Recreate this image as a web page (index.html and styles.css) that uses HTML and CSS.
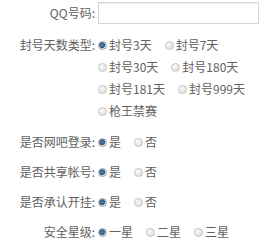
FILE: index.html
```html
<!DOCTYPE html>
<html>
  <head>
    <meta charset="utf-8" />
    <title>封号申请</title>
    <link rel="stylesheet" href="styles.css">
  </head>
  <body>
    <form class="ban-form" action="">
      <div class="row first">
        <label class="lbl">QQ号码:</label>
        <input class="txt" type="text" />
      </div>

      <div class="row multi">
        <label class="lbl">封号天数类型:</label>
        <div class="opts">
          <div class="line">
            <span class="opt"><i class="radio on"></i>封号3天</span>
            <span class="opt"><i class="radio"></i>封号7天</span>
          </div>
          <div class="line">
            <span class="opt"><i class="radio"></i>封号30天</span>
            <span class="opt"><i class="radio"></i>封号180天</span>
          </div>
          <div class="line">
            <span class="opt"><i class="radio"></i>封号181天</span>
            <span class="opt"><i class="radio"></i>封号999天</span>
          </div>
          <div class="line">
            <span class="opt"><i class="radio"></i>枪王禁赛</span>
          </div>
        </div>
      </div>

      <div class="row">
        <label class="lbl">是否网吧登录:</label>
        <div class="opts">
          <div class="line">
            <span class="opt"><i class="radio on"></i>是</span>
            <span class="opt"><i class="radio"></i>否</span>
          </div>
        </div>
      </div>

      <div class="row">
        <label class="lbl">是否共享帐号:</label>
        <div class="opts">
          <div class="line">
            <span class="opt"><i class="radio on"></i>是</span>
            <span class="opt"><i class="radio"></i>否</span>
          </div>
        </div>
      </div>

      <div class="row">
        <label class="lbl">是否承认开挂:</label>
        <div class="opts">
          <div class="line">
            <span class="opt"><i class="radio on"></i>是</span>
            <span class="opt"><i class="radio"></i>否</span>
          </div>
        </div>
      </div>

      <div class="row">
        <label class="lbl">安全星级:</label>
        <div class="opts">
          <div class="line">
            <span class="opt"><i class="radio on"></i>一星</span>
            <span class="opt"><i class="radio"></i>二星</span>
            <span class="opt"><i class="radio"></i>三星</span>
          </div>
        </div>
      </div>
    </form>
  </body>
</html>
```

FILE: styles.css
```css
body {
  margin: 0;
  background: #fff;
  color: #616161;
  font-family: "Noto Sans CJK SC", "DejaVu Sans", sans-serif;
  font-size: 12px;
}

.ban-form {
  padding-top: 2px;
}

.row {
  display: flex;
  margin-bottom: 8px;
  line-height: 22px;
}

.row.first {
  margin-bottom: 10px;
}

.row.multi {
  margin-bottom: 9px;
}

.lbl {
  width: 95px;
  text-align: right;
  flex-shrink: 0;
}

.txt {
  box-sizing: border-box;
  height: 22px;
  width: 161px;
  margin: 0 0 0 3px;
  padding: 0 4px;
  border: 1px solid #d6d6d6;
  box-shadow: inset 0 1px 1px #eee;
  background: #fff;
  outline: none;
}

.opts {
  padding-left: 3px;
}

.line {
  display: flex;
  height: 22px;
}

.opt {
  display: flex;
  align-items: center;
  margin-right: 13px;
  white-space: nowrap;
}

.radio {
  box-sizing: border-box;
  width: 9px;
  height: 9px;
  margin-right: 2px;
  border-radius: 50%;
  border: 1px solid #c4c4c4;
  background: radial-gradient(circle at 35% 35%, #fafafa 0%, #e2e2e2 70%, #d4d4d4 100%);
}

.radio.on {
  border-color: #9aa3ab;
  background: radial-gradient(circle at 45% 45%, #6b93b3 0%, #1f4f74 45%, #d9dde0 60%, #eceeef 100%);
}
```
